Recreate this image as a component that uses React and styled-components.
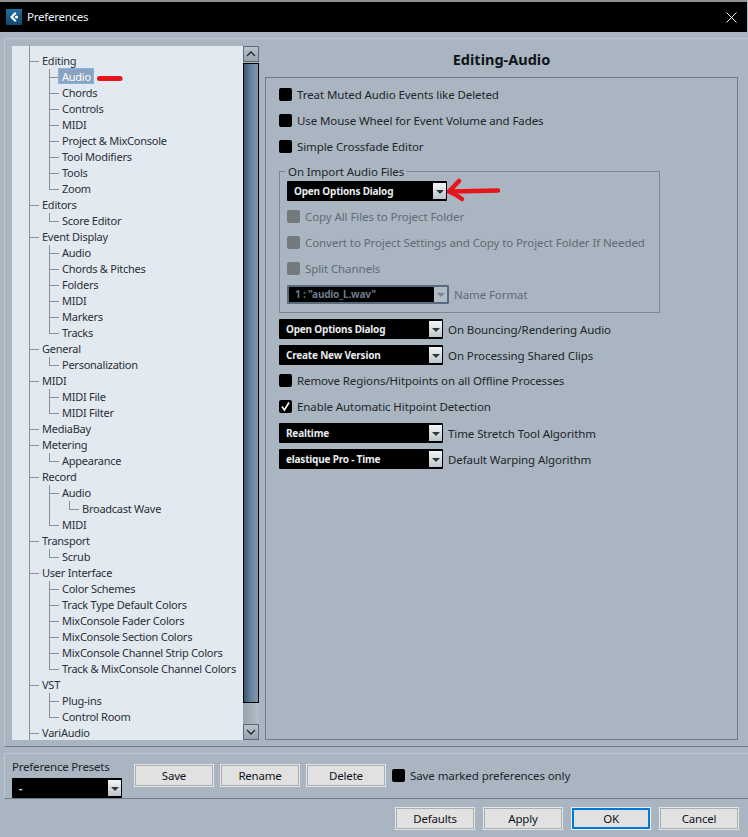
import React from "react";
import styled, { createGlobalStyle } from "styled-components";

const GlobalStyle = createGlobalStyle`
  html, body { margin: 0; padding: 0; background: #a9b5c0; }
  body { font-family: "Noto Sans", "Open Sans", sans-serif; }
`;

const tree = [
  { t: "Editing", kids: [{ t: "Audio", selected: true }, { t: "Chords" }, { t: "Controls" }, { t: "MIDI" }, { t: "Project & MixConsole" }, { t: "Tool Modifiers" }, { t: "Tools" }, { t: "Zoom" }] },
  { t: "Editors", kids: [{ t: "Score Editor" }] },
  { t: "Event Display", kids: [{ t: "Audio" }, { t: "Chords & Pitches" }, { t: "Folders" }, { t: "MIDI" }, { t: "Markers" }, { t: "Tracks" }] },
  { t: "General", kids: [{ t: "Personalization" }] },
  { t: "MIDI", kids: [{ t: "MIDI File" }, { t: "MIDI Filter" }] },
  { t: "MediaBay" },
  { t: "Metering", kids: [{ t: "Appearance" }] },
  { t: "Record", kids: [{ t: "Audio", kids: [{ t: "Broadcast Wave" }] }, { t: "MIDI" }] },
  { t: "Transport", kids: [{ t: "Scrub" }] },
  { t: "User Interface", kids: [{ t: "Color Schemes" }, { t: "Track Type Default Colors" }, { t: "MixConsole Fader Colors" }, { t: "MixConsole Section Colors" }, { t: "MixConsole Channel Strip Colors" }, { t: "Track & MixConsole Channel Colors" }] },
  { t: "VST", kids: [{ t: "Plug-ins" }, { t: "Control Room" }] },
  { t: "VariAudio" },
];

const Window = styled.div`
  position: relative;
  width: 748px;
  height: 837px;
  overflow: hidden;
  background: #a9b5c0;
  display: flex;
  flex-direction: column;
  color: #20262b;
  font-size: 11.5px;
  letter-spacing: -0.09px;
`;

const TitleBar = styled.div`
  height: 30px;
  margin-top: 2px;
  margin-right: 1px;
  background: #000;
  display: flex;
  align-items: center;
  padding: 0 10px 0 6px;
  color: #eef2f5;
  font-size: 11.5px;
  letter-spacing: -0.25px;
  gap: 5px;
  flex: none;
  box-shadow: 0 -2px 0 #8f9498;
`;

const TitleText = styled.span`
  flex: 1;
  padding-bottom: 2px;
`;

const Main = styled.div`
  flex: none;
  height: 709px;
  margin: 6px 0 0 4px;
  border-top: 1px solid #bcc7d0;
  border-left: 1px solid #bcc7d0;
  border-bottom: 1px solid #6f7a85;
  box-sizing: border-box;
  padding: 7px 10px 6px 7px;
  display: flex;
`;

const TreeList = styled.div`
  width: 231px;
  height: 694px;
  background: #e3e9f1;
  overflow: hidden;
  flex: none;
`;

const Row = styled.div`
  height: ${(p) => p.$h || 16}px;
  display: flex;
  align-items: stretch;
  padding-left: 8px;
  white-space: nowrap;
`;

const guideImage = {
  pass: "linear-gradient(#87919a,#87919a) 9px 0 / 1px 100% no-repeat",
  tee: "linear-gradient(#87919a,#87919a) 9px 0 / 1px 100% no-repeat, linear-gradient(#87919a,#87919a) 9px 8px / 10px 1px no-repeat",
  last: "linear-gradient(#87919a,#87919a) 9px 0 / 1px 9px no-repeat, linear-gradient(#87919a,#87919a) 9px 8px / 10px 1px no-repeat",
};

const Guide = styled.span`
  width: 20px;
  flex: none;
  background: ${(p) => guideImage[p.$kind] || "none"};
`;

const Label = styled.span`
  margin-left: ${(p) => (p.$selected ? "-2px" : "2px")};
  font-size: 11px;
  letter-spacing: -0.25px;
  line-height: 16px;
  color: ${(p) => (p.$selected ? "#fff" : "#2a3036")};
  ${(p) => p.$selected && `
    background: #8aa3c1;
    border: 1px solid #7fb4ea;
    padding: 0 3px;
    width: 28px;
    height: 14px;
    margin-top: -1px;
    box-sizing: content-box;
  `}
`;

const Scrollbar = styled.div`
  width: 16px;
  height: 694px;
  flex: none;
  display: flex;
  flex-direction: column;
  background: #a5b1bc;
`;

const ScrollButton = styled.div`
  height: 16px;
  box-sizing: border-box;
  border: 1px solid #5f6a75;
  background: linear-gradient(#b9c3cc, #98a5b1);
  display: flex;
  align-items: center;
  justify-content: center;
  flex: none;
`;

const Thumb = styled.div`
  height: 640px;
  margin-top: 1px;
  box-sizing: border-box;
  border: 1px solid #000;
  background: linear-gradient(90deg, #3c5570, #6d86a0 55%, #8097ae);
  flex: none;
`;

const Track = styled.div`
  flex: 1;
  background: linear-gradient(90deg, #96a3af, #b4bec8);
`;

const RightSide = styled.div`
  width: 473px;
  margin-left: 6px;
  flex: none;
  display: flex;
  flex-direction: column;
`;

const PageTitle = styled.div`
  height: 31px;
  text-align: center;
  font-size: 14.5px;
  font-weight: 700;
  line-height: 27px;
  letter-spacing: 0;
  color: #101418;
  flex: none;
`;

const Page = styled.div`
  flex: 1;
  border: 1px solid #6f7a85;
  box-sizing: border-box;
  padding: 3px 13px 0;
`;

const OptionRow = styled.div`
  height: 26px;
  box-sizing: border-box;
  padding-bottom: ${(p) => (p.$raised ? 2 : 0)}px;
  display: flex;
  align-items: center;
  gap: 5px;
  color: ${(p) => (p.$disabled ? "#5f6b76" : "#20262b")};
  white-space: nowrap;
`;

const Box = styled.span`
  width: 13px;
  height: 13px;
  border-radius: 2px;
  flex: none;
  background: ${(p) => (p.$disabled ? "#74797e" : "#000")};
  display: flex;
  align-items: center;
  justify-content: center;
`;

const Group = styled.fieldset`
  margin: 7px 0 0;
  padding: 5px 7px 0;
  width: 381px;
  height: 147px;
  box-sizing: border-box;
  border: 1px solid #7b8691;
  min-width: 0;
`;

const Legend = styled.legend`
  padding: 0 3px;
  margin-left: -2px;
  line-height: 12px;
  height: 10px;
`;

const Select = styled.div`
  width: ${(p) => p.$w}px;
  height: ${(p) => p.$h || 20}px;
  margin-bottom: ${(p) => p.$mb || 0}px;
  background: #000;
  box-sizing: border-box;
  border-radius: 1px;
  color: ${(p) => (p.$disabled ? "#6f7d8b" : "#e6ebef")};
  border: ${(p) => (p.$disabled ? "2px solid #576b80" : "none")};
  font-size: 10px;
  font-weight: 700;
  letter-spacing: -0.2px;
  display: flex;
  align-items: center;
  justify-content: space-between;
  padding-left: ${(p) => p.$pad ?? 7}px;
  flex: none;
`;

const SelectArrow = styled.span`
  width: 13px;
  height: ${(p) => (p.$disabled ? "100%" : "16px")};
  margin-right: ${(p) => (p.$disabled ? "0" : "1px")};
  background: ${(p) => (p.$disabled ? "#b0bbc5" : "linear-gradient(#f4f6f8, #bcc5cd)")};
  display: flex;
  align-items: center;
  justify-content: center;
  &::after {
    content: "";
    border-left: 4px solid transparent;
    border-right: 4px solid transparent;
    border-top: 4px solid ${(p) => (p.$disabled ? "#78838e" : "#30363c")};
    margin-top: 1px;
  }
`;

const SelectRow = styled.div`
  height: 26px;
  margin-top: ${(p) => p.$mt || 0}px;
  display: flex;
  align-items: center;
  gap: 5px;
  white-space: nowrap;
  color: ${(p) => (p.$disabled ? "#5f6b76" : "#20262b")};
`;

const PresetBar = styled.div`
  flex: none;
  height: 44px;
  margin: 6px 0 0 4px;
  border-top: 1px solid #bcc7d0;
  border-left: 1px solid #bcc7d0;
  border-bottom: 1px solid #6f7a85;
  padding: 0 0 0 7px;
  display: flex;
  gap: 13px;
  overflow: hidden;
`;

const PresetColumn = styled.div`
  width: 110px;
  padding-top: 3px;
  flex: none;
  line-height: 19px;
  display: flex;
  flex-direction: column;
  gap: 2px;
  letter-spacing: -0.2px;
`;

const PresetButtons = styled.div`
  display: flex;
  gap: 8px;
  align-items: center;
  padding-bottom: 1px;
  height: 44px;
  box-sizing: border-box;
`;

const Button = styled.div`
  width: 78px;
  height: 21px;
  box-sizing: border-box;
  background: #e1e1e1;
  color: #101418;
  border: ${(p) => (p.$primary ? "2px solid #0078d7" : "1px solid #adadad")};
  outline: 1px solid ${(p) => (p.$primary ? "#e8eef3" : "#e2e6e9")};
  display: flex;
  align-items: center;
  justify-content: center;
  font-size: 11.5px;
  letter-spacing: -0.2px;
  flex: none;
`;

const InlineCheck = styled.div`
  display: flex;
  align-items: center;
  gap: 5px;
  margin-left: -1px;
  white-space: nowrap;
`;

const Footer = styled.div`
  flex: none;
  display: flex;
  gap: 10px;
  justify-content: flex-end;
  padding: 9px 10px 0 0;
`;

const Annotation = styled.svg`
  position: absolute;
  left: ${(p) => p.$x}px;
  top: ${(p) => p.$y}px;
`;

function Guides({ level, isLast, parentLast }) {
  if (level === 0) return <Guide $kind="tee" />;
  if (level === 1)
    return (
      <>
        <Guide $kind="pass" />
        <Guide $kind={isLast ? "last" : "tee"} />
      </>
    );
  return (
    <>
      <Guide $kind="pass" />
      <Guide $kind={parentLast ? "none" : "pass"} />
      <Guide $kind={isLast ? "last" : "tee"} />
    </>
  );
}

function TreeNode({ node, level = 0, isLast, parentLast }) {
  return (
    <>
      <Row>
        <Guides level={level} isLast={isLast} parentLast={parentLast} />
        <Label $selected={node.selected}>{node.t}</Label>
      </Row>
      {node.kids &&
        node.kids.map((k, i) => (
          <TreeNode key={k.t + i} node={k} level={level + 1} isLast={i === node.kids.length - 1} parentLast={isLast} />
        ))}
    </>
  );
}

const Option = ({ children, disabled, checked, raised }) => (
  <OptionRow $disabled={disabled} $raised={raised}>
    <Box $disabled={disabled}>
      {checked && (
        <svg width="11" height="11" viewBox="0 0 11 11">
          <path d="M2 5.5 L4.4 9 L9 1.5" fill="none" stroke="#fff" strokeWidth="1.6" />
        </svg>
      )}
    </Box>
    {children}
  </OptionRow>
);

const Dropdown = ({ value, w, h, pad, mb, disabled }) => (
  <Select $w={w} $h={h} $pad={pad} $mb={mb} $disabled={disabled}>
    {value}
    <SelectArrow $disabled={disabled} />
  </Select>
);

export default function App() {
  return (
    <Window>
      <GlobalStyle />
      <TitleBar>
        <svg width="16" height="16" viewBox="0 0 16 16">
          <defs>
            <linearGradient id="logoFill" x1="0" y1="0" x2="0" y2="1">
              <stop offset="0" stopColor="#1f6d9f" />
              <stop offset="1" stopColor="#10486e" />
            </linearGradient>
          </defs>
          <rect width="16" height="16" fill="url(#logoFill)" />
          <path d="M9 3 L4 8 L9 13 L10.5 11.5 L7 8 L10.5 4.5 Z" fill="#fff" />
          <circle cx="10.5" cy="8" r="1.6" fill="#fff" />
        </svg>
        <TitleText>Preferences</TitleText>
        <svg width="11" height="11" viewBox="0 0 11 11">
          <path d="M0.5 0.5 L10.5 10.5 M10.5 0.5 L0.5 10.5" stroke="#f2f2f2" strokeWidth="1" />
        </svg>
      </TitleBar>

      <Main>
        <TreeList>
          <Row $h={7}>
            <Guide $kind="pass" />
          </Row>
          {tree.map((n) => (
            <TreeNode key={n.t} node={n} />
          ))}
        </TreeList>
        <Scrollbar>
          <ScrollButton>
            <svg width="10" height="6" viewBox="0 0 10 6">
              <path d="M1 5 L5 1 L9 5" fill="none" stroke="#20262b" strokeWidth="1.3" />
            </svg>
          </ScrollButton>
          <Thumb />
          <Track />
          <ScrollButton>
            <svg width="10" height="6" viewBox="0 0 10 6">
              <path d="M1 1 L5 5 L9 1" fill="none" stroke="#20262b" strokeWidth="1.3" />
            </svg>
          </ScrollButton>
        </Scrollbar>
        <RightSide>
          <PageTitle>Editing-Audio</PageTitle>
          <Page>
            <Option>Treat Muted Audio Events like Deleted</Option>
            <Option>Use Mouse Wheel for Event Volume and Fades</Option>
            <Option>Simple Crossfade Editor</Option>
            <Group>
              <Legend>On Import Audio Files</Legend>
              <Dropdown value="Open Options Dialog" w={160} mb={2} />
              <Option disabled>Copy All Files to Project Folder</Option>
              <Option disabled>Convert to Project Settings and Copy to Project Folder If Needed</Option>
              <Option disabled>Split Channels</Option>
              <SelectRow $disabled>
                <Dropdown value={'1 : "audio_L.wav"'} w={162} h={19} pad={6} disabled />
                Name Format
              </SelectRow>
            </Group>
            <SelectRow $mt={3}>
              <Dropdown value="Open Options Dialog" w={164} />
              On Bouncing/Rendering Audio
            </SelectRow>
            <SelectRow>
              <Dropdown value="Create New Version" w={164} />
              On Processing Shared Clips
            </SelectRow>
            <Option raised>Remove Regions/Hitpoints on all Offline Processes</Option>
            <Option raised checked>Enable Automatic Hitpoint Detection</Option>
            <SelectRow>
              <Dropdown value="Realtime" w={164} />
              Time Stretch Tool Algorithm
            </SelectRow>
            <SelectRow>
              <Dropdown value="elastique Pro - Time" w={164} />
              Default Warping Algorithm
            </SelectRow>
          </Page>
        </RightSide>
      </Main>

      <PresetBar>
        <PresetColumn>
          Preference Presets
          <Dropdown value="-" w={110} />
        </PresetColumn>
        <PresetButtons>
          <Button>Save</Button>
          <Button>Rename</Button>
          <Button>Delete</Button>
          <InlineCheck>
            <Box />
            Save marked preferences only
          </InlineCheck>
        </PresetButtons>
      </PresetBar>

      <Footer>
        <Button>Defaults</Button>
        <Button>Apply</Button>
        <Button $primary>OK</Button>
        <Button>Cancel</Button>
      </Footer>

      <Annotation $x={97} $y={75} width="26" height="7" viewBox="0 0 26 7">
        <path d="M2.5 3.5 L23 3.5" stroke="#e8141c" strokeWidth="5" strokeLinecap="round" />
      </Annotation>
      <Annotation $x={445} $y={176} width="56" height="27" viewBox="0 0 56 27">
        <path d="M53 14.5 L30 15 Q20 15 5 15.5 M14 5 L4 15.5 Q10 18 17 23" fill="none" stroke="#e8141c" strokeWidth="4.5" strokeLinecap="round" strokeLinejoin="round" />
      </Annotation>
    </Window>
  );
}
